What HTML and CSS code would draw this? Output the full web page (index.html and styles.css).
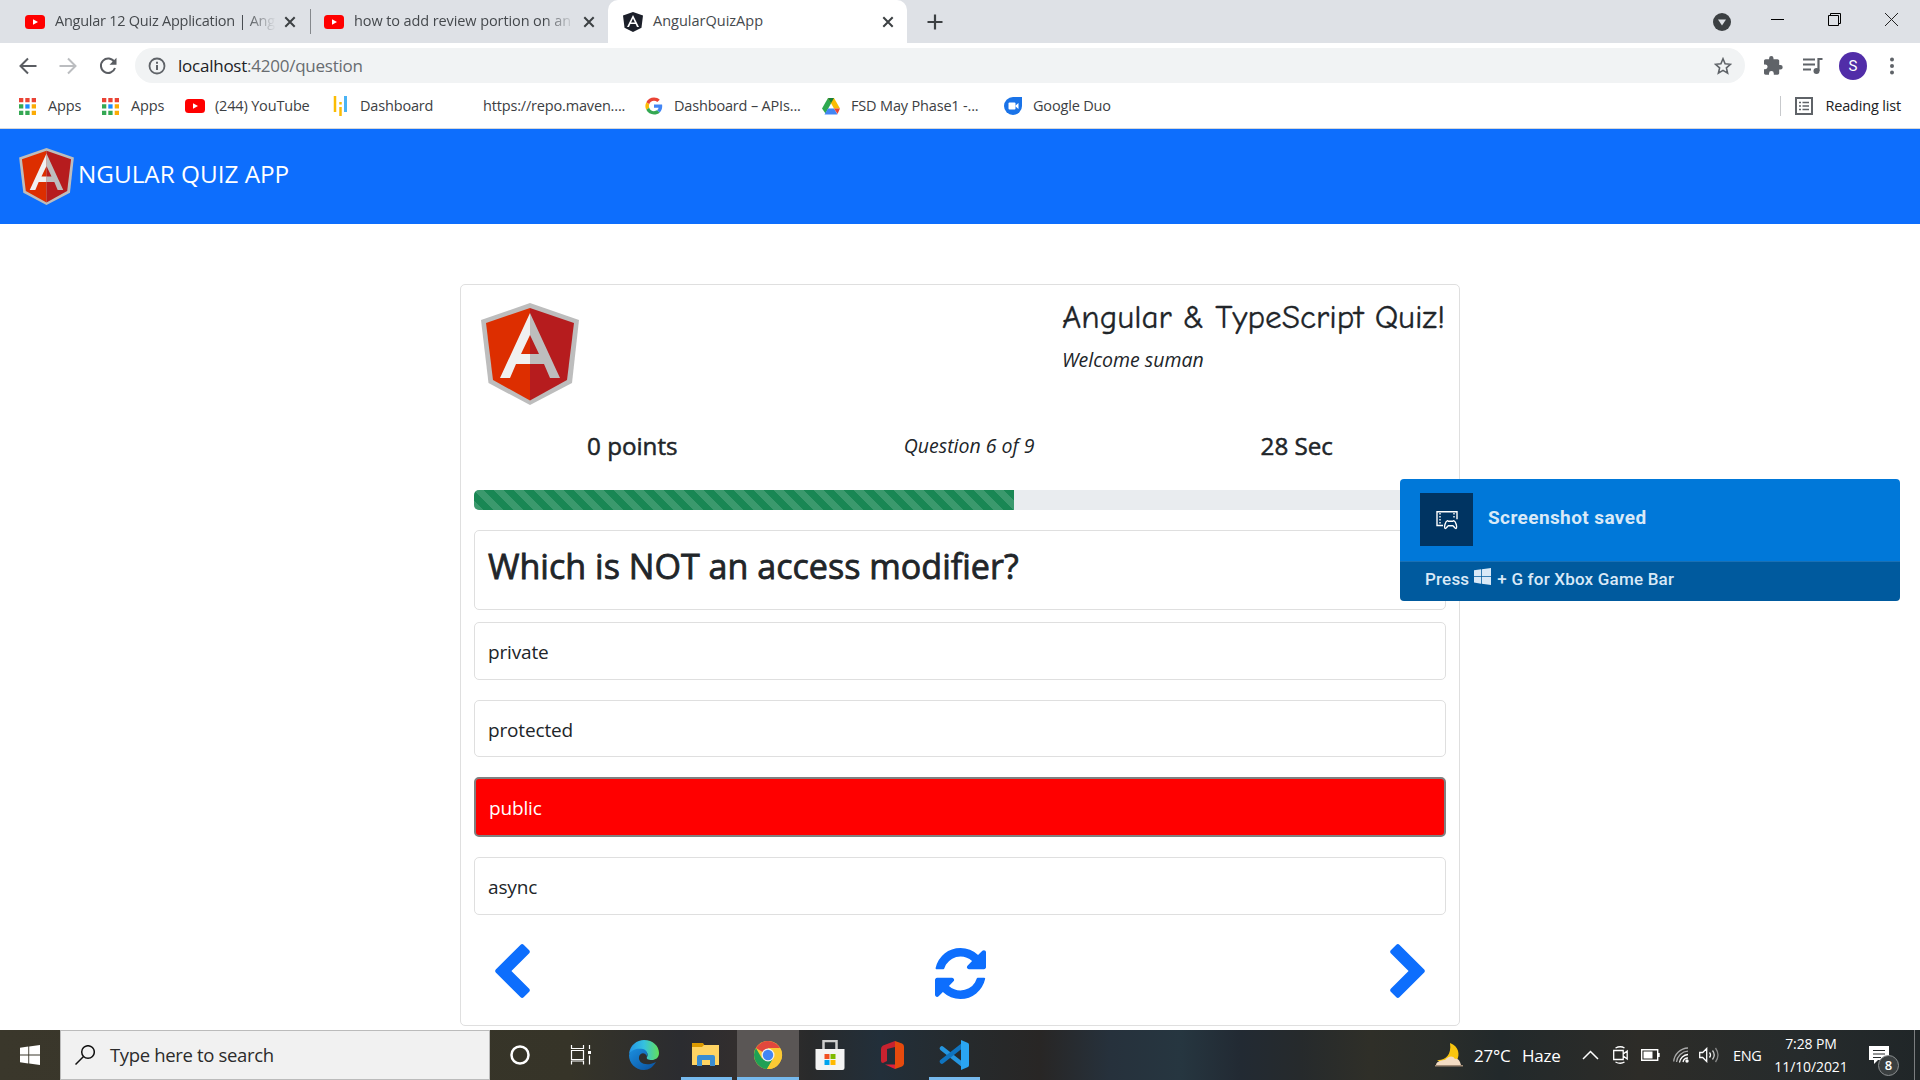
FILE: index.html
```html
<!DOCTYPE html>
<html lang="en">
<head>
<meta charset="utf-8">
<title>AngularQuizApp</title>
<link rel="stylesheet" href="styles.css">
</head>
<body>
<svg class="defs" aria-hidden="true">
  <symbol id="youtube" viewBox="0 0 20 14"><rect width="20" height="14" rx="3.5" fill="#f00"/><path d="M8 4.2v5.6L13 7z" fill="#fff"/></symbol>
  <symbol id="close" viewBox="0 0 12 12"><path d="M1.3 1.3l9.4 9.4M10.7 1.3L1.3 10.7" stroke="#3c4043" stroke-width="2"/></symbol>
  <symbol id="apps" viewBox="0 0 17 17"><path d="M0 0h4.3v4.3H0zM6.3 0h4.3v4.3H6.3zM12.7 0H17v4.3h-4.3z" fill="#ea4335"/><path d="M0 6.3h4.3v4.3H0zM0 12.7h4.3V17H0zM6.3 12.7h4.3V17H6.3z" fill="#34a853"/><path d="M6.3 6.3h4.3v4.3H6.3z" fill="#1a8cff"/><path d="M12.7 6.3H17v4.3h-4.3zM12.7 12.7H17V17h-4.3z" fill="#fbab05"/></symbol>
  <symbol id="shield" viewBox="0 0 98 102"><path d="M49 0l49 17-7 63-42 22L7.500 80 0 17z" fill="#bdbdbd"/><path d="M49 5v92.500L12 77 5 20z" fill="#dd2e00"/><path d="M49 5v92.500L86 77l7-57z" fill="#b61c1e"/><path d="M49 10L19 75h10l6-14h14V51h-9l9-19z" fill="#f0f0f0"/><path d="M49 10l30 65H69l-6-14H49V51h9l-9-19z" fill="#bdbdbd"/></symbol>
  <symbol id="windows" viewBox="0 0 20 20"><path d="M0 2.700l8.300-1.200v8H0zM9.200 1.400L20 0v9.500H9.200zM0 10.400h8.300v8L0 17.200zM9.200 10.400H20V20L9.200 18.500z" fill="currentColor"/></symbol>
  <symbol id="chevron" viewBox="410 26 1036 1612"><path fill="currentColor" d="M1427 301l-531 531 531 531q19 19 19 45t-19 45l-166 166q-19 19-45 19t-45-19l-742-742q-19-19-19-45t19-45l742-742q19-19 45-19t45 19l166 166q19 19 19 45t-19 45z"/></symbol>
</svg>

<header class="browser">
  <div class="tabs">
    <div class="tab"><svg class="fav-yt"><use href="#youtube"/></svg><span class="tab-title fade">Angular 12 Quiz Application | Ang</span><svg class="tab-close"><use href="#close"/></svg></div>
    <div class="tab-sep"></div>
    <div class="tab tab-second"><svg class="fav-yt"><use href="#youtube"/></svg><span class="tab-title fade">how to add review portion on an</span><svg class="tab-close"><use href="#close"/></svg></div>
    <div class="tab active"><svg class="fav-ng" viewBox="0 0 20 20"><path d="M10 0l10 3.500-1.500 12.300L10 20l-8.500-4.200L0 3.500z" fill="#1b1f29"/><path d="M10 3L4 15h2l1.400-3h5.200l1.400 3h2zm0 3.500l1.900 4H8.100z" fill="#fff"/></svg><span class="tab-title">AngularQuizApp</span><svg class="tab-close"><use href="#close"/></svg></div>
    <svg class="new-tab" viewBox="0 0 16 16"><path d="M8 .500v15M.500 8h15" stroke="#3c4043" stroke-width="2.200"/></svg>
    <div class="window-controls">
      <svg class="tab-search" viewBox="0 0 18 18"><circle cx="9" cy="9" r="9" fill="#3c4043"/><path d="M5 6.500h8L9 12.500z" fill="#dee1e6"/></svg>
      <svg class="wc" viewBox="0 0 13 13"><path d="M0 6.500h13" stroke="#000"/></svg>
      <svg class="wc" viewBox="0 0 13 13"><path d="M.500 2.500h10v10h-10zM2.500 2.500v-2h10v10h-2" fill="none" stroke="#000"/></svg>
      <svg class="wc" viewBox="0 0 13 13"><path d="M0 0l13 13M13 0L0 13" stroke="#222"/></svg>
    </div>
  </div>

  <div class="toolbar">
    <div class="nav-icons">
      <svg viewBox="0 0 18 18"><path d="M17.500 9H2M9 1.500L1.500 9 9 16.500" fill="none" stroke="#5a5d62" stroke-width="2"/></svg>
      <svg viewBox="0 0 18 18"><path d="M.500 9H16M9 1.500L16.500 9 9 16.500" fill="none" stroke="#bbbdc0" stroke-width="2"/></svg>
      <svg viewBox="0 0 18 18"><path d="M15.300 5A7.200 7.200 0 1 0 16 11" fill="none" stroke="#5a5d62" stroke-width="2"/><path d="M17.500.800v7h-7z" fill="#5a5d62"/></svg>
    </div>
    <div class="omnibox">
      <svg class="info" viewBox="0 0 18 18"><circle cx="9" cy="9" r="7.500" fill="none" stroke="#5f6368" stroke-width="1.800"/><path d="M9 8v5M9 4.800v1.900" stroke="#5f6368" stroke-width="2"/></svg>
      <span class="url"><b>localhost</b>:4200/question</span>
      <svg class="star" viewBox="0 0 18 18"><path d="M9 1.800l2.100 5 5.400.500-4.100 3.600 1.200 5.300L9 13.400l-4.600 2.800 1.200-5.300-4.100-3.600 5.400-.500z" fill="none" stroke="#5f6368" stroke-width="1.600"/></svg>
    </div>
    <div class="actions">
      <svg viewBox="0 0 20 20" class="puzzle"><path d="M17.500 9h-1.300V5c0-1-.800-1.700-1.700-1.700h-4V2.200a2.200 2.200 0 0 0-4.400 0v1.100H2.700C1.700 3.300 1 4 1 5v3.400h1.200a2.400 2.400 0 0 1 0 4.800H1V17c0 1 .700 1.700 1.700 1.700H6v-1.200a2.400 2.400 0 0 1 4.800 0v1.200h3.700c1 0 1.700-.800 1.700-1.700v-3.600h1.300a2.200 2.200 0 0 0 0-4.400z" fill="#5f6368"/></svg>
      <svg viewBox="0 0 20 18" class="music"><path d="M0 2.500h12M0 7.500h12M0 12.500h8" stroke="#5f6368" stroke-width="2"/><path d="M15.500 14V2h4" fill="none" stroke="#5f6368" stroke-width="2.200"/><circle cx="13.500" cy="14" r="3" fill="#5f6368"/></svg>
      <span class="avatar">S</span>
      <svg viewBox="0 0 4 18" class="dots"><g fill="#5f6368"><circle cx="2" cy="2.500" r="2"/><circle cx="2" cy="9" r="2"/><circle cx="2" cy="15.500" r="2"/></g></svg>
    </div>
  </div>

  <div class="bookmarks">
    <div class="bookmark"><svg class="bi-apps"><use href="#apps"/></svg><span>Apps</span></div>
    <div class="bookmark"><svg class="bi-apps"><use href="#apps"/></svg><span>Apps</span></div>
    <div class="bookmark"><svg class="bi-yt"><use href="#youtube"/></svg><span>(244) YouTube</span></div>
    <div class="bookmark"><svg viewBox="0 0 20 20"><path d="M5 0v16M10.500 11v9" stroke="#fbbc04" stroke-width="2.500"/><path d="M10.500 6v2.500" stroke="#fbbc04" stroke-width="2.500"/><path d="M15.500 0v16" stroke="#4ab3f4" stroke-width="3"/></svg><span>Dashboard</span></div>
    <div class="bookmark"><i></i><span>https://repo.maven....</span></div>
    <div class="bookmark"><svg viewBox="-4 -4 56 56"><path fill="#ea4335" d="M24 9.500c3.500 0 6.700 1.200 9.200 3.600l6.900-6.900C35.900 2.400 30.500 0 24 0 14.600 0 6.500 5.400 2.600 13.200l8 6.200C12.400 13.700 17.700 9.500 24 9.500z"/><path fill="#4285f4" d="M47 24.600c0-1.600-.200-3.100-.400-4.600H24v9h12.900c-.600 3-2.200 5.500-4.700 7.200l7.700 6C44.400 38 47 31.800 47 24.600z"/><path fill="#fbbc05" d="M10.500 28.600a14.500 14.500 0 0 1 0-9.200l-8-6.200a24 24 0 0 0 0 21.600z"/><path fill="#34a853" d="M24 48c6.500 0 11.900-2.100 15.900-5.800l-7.700-6c-2.200 1.500-4.900 2.300-8.200 2.300-6.300 0-11.600-4.200-13.500-9.900l-8 6.200C6.500 42.600 14.600 48 24 48z"/></svg><span>Dashboard – APIs...</span></div>
    <div class="bookmark"><svg viewBox="0 0 20 20"><path d="M7 2h6L4.500 17.500 1 12.500z" fill="#2da94f"/><path d="M7 2h6l6 10.500h-6z" fill="#fbbc04"/><path d="M7 2h6l-3 5.300z" fill="#188038"/><path d="M7 12.500h6l3.500 6h-13z" fill="#4285f4"/><path d="M13 12.500h6l-2.500 5.500z" fill="#ea4335"/></svg><span>FSD May Phase1 -...</span></div>
    <div class="bookmark"><svg viewBox="0 0 20 20"><path d="M10 1h9v9a9 9 0 1 1-9-9z" fill="#1a73e8"/><rect x="5.500" y="6.500" width="7" height="7" rx="1" fill="#fff"/><path d="M12.500 9.500l3-2.500v6l-3-2.500z" fill="#fff"/></svg><span>Google Duo</span></div>
    <div class="reading-list"><svg viewBox="0 0 18 18"><path d="M1 1h16v16H1z" fill="none" stroke="#5f6368" stroke-width="2"/><path d="M4 5.500h2M4 9h2M4 12.500h2M7.500 5.500H14M7.500 9H14M7.500 12.500H14" stroke="#5f6368" stroke-width="1.700"/></svg><span>Reading list</span></div>
  </div>
</header>

<nav class="navbar"><svg class="brand-logo"><use href="#shield"/></svg><span class="brand">NGULAR QUIZ APP</span></nav>

<main class="page">
  <section class="card">
    <div class="card-head">
      <svg class="card-logo"><use href="#shield"/></svg>
      <div class="headings"><h1>Angular &amp; TypeScript Quiz!</h1><em>Welcome suman</em></div>
    </div>
    <div class="stats"><strong class="points">0 points</strong><em>Question 6 of 9</em><strong class="secs">28 Sec</strong></div>
    <div class="progress"><div class="bar"></div></div>
    <div class="question"><h2>Which is NOT an access modifier?</h2></div>
    <ol class="options">
      <li>private</li>
      <li>protected</li>
      <li class="wrong">public</li>
      <li>async</li>
    </ol>
    <div class="pager">
      <svg class="chev"><use href="#chevron"/></svg>
      <svg class="refresh" viewBox="128 128 1536 1536"><path fill="currentColor" d="M1639 1056q0 5-1 7-64 268-268 434.500t-478 166.500q-146 0-282.500-55t-243.500-157l-129 129q-19 19-45 19t-45-19-19-45v-448q0-26 19-45t45-19h448q26 0 45 19t19 45-19 45l-137 137q71 66 161 102t187 36q134 0 250-65t186-179q11-17 53-117 8-23 30-23h192q13 0 22.500 9.500t9.500 22.500zm25-800v448q0 26-19 45t-45 19h-448q-26 0-45-19t-19-45 19-45l138-138q-148-137-349-137-134 0-250 65t-186 179q-11 17-53 117-8 23-30 23h-199q-13 0-22.500-9.500t-9.500-22.500v-7q65-268 270-434.500t480-166.500q146 0 284 55.500t245 156.500l130-129q19-19 45-19t45 19 19 45z"/></svg>
      <svg class="chev next"><use href="#chevron"/></svg>
    </div>
  </section>
</main>

<aside class="toast">
  <div class="toast-main">
    <span class="toast-icon"><svg viewBox="0 0 22 20"><g fill="none" stroke="#fff" stroke-width="1.400"><path d="M7 15.500H1V1.700h20v7.500"/><path d="M4 3v11M18 3v6" stroke-dasharray="1.500 1.500"/><path d="M9 18.500c-1.200-1 .200-7 2.500-7.800l1 .600h4.200l1-.600c2.300.800 3.700 6.800 2.500 7.800-1 .600-2.300-2.200-3.200-2.700h-4.800c-.900.500-2.200 3.300-3.200 2.700z"/></g></svg></span>
    <b>Screenshot saved</b>
  </div>
  <div class="toast-foot"><span class="press">Press</span><svg><use href="#windows"/></svg><span class="hint">+ G for Xbox Game Bar</span></div>
</aside>

<footer class="taskbar">
  <div class="start"><svg><use href="#windows"/></svg></div>
  <div class="search"><svg viewBox="0 0 20 20"><circle cx="13" cy="7" r="6.300" fill="none" stroke="#111" stroke-width="1.500"/><path d="M8.500 11.500L.500 19.500" stroke="#111" stroke-width="1.500"/></svg><span>Type here to search</span></div>
  <div class="apps">
    <div class="app cortana"><svg viewBox="0 0 30 30"><circle cx="15" cy="15" r="8.500" fill="none" stroke="#fff" stroke-width="2.500"/></svg></div>
    <div class="app task-view"><svg viewBox="0 0 30 30"><g fill="none" stroke="#fff" stroke-width="1.200"><path d="M5.500 5v3.500h12V5M5.500 10.500h12v9h-12zM5.500 24.500V21h12v3.500M23.500 5v4M23.500 15.500v9"/></g><path d="M22 11h3v3h-3z" fill="#fff"/></svg></div>
    <div class="app"><svg viewBox="0 0 30 30"><defs><linearGradient id="edgeTop" x1="0" x2="1"><stop stop-color="#2394e6"/><stop offset=".5" stop-color="#35c1e0"/><stop offset="1" stop-color="#62e05a"/></linearGradient><linearGradient id="edgeLow" x1="0" y1="0" x2="1" y2="1"><stop stop-color="#1b8fe0"/><stop offset="1" stop-color="#0a4f9c"/></linearGradient></defs><path d="M0 14C1 5 8 0 15 0c9 0 15 6 15 13 0 5-4 7-7 7-4 0-6-1-5-3 1-1 1-5-2-6C10 8 3 11 0 14z" fill="url(#edgeTop)"/><path d="M0 15C2 9 9 8 14 9c4 1 5 5 4 8-1-5-7-5-8 0-1 6 7 10 17 5-3 5-7 8-12 8C6 30 0 23 0 15z" fill="url(#edgeLow)"/></svg></div>
    <div class="app open"><svg viewBox="0 0 30 30"><path d="M1 3h11l2 3h14v8H1z" fill="#dc9a00"/><path d="M1 7h10l2-2h15v20H1z" fill="#ffd463"/><path d="M6 26V17q0-2 2-2h14q2 0 2 2v9h-5v-6h-8v6z" fill="#3a8dd2"/></svg></div>
    <div class="app open focused"><svg viewBox="0 0 30 30"><circle cx="15" cy="15" r="14" fill="#fbc934"/><path d="M15 15L2.900 8A14 14 0 0 1 27.100 8H15z" fill="#e2483d"/><path d="M2.900 8A14 14 0 0 0 14 29l6-10.500H9z" fill="#1fa055"/><path d="M15 8.500h12.400A14 14 0 0 1 14 29l7-11z" fill="#fbc934"/><circle cx="15" cy="15" r="6.500" fill="#f1f1f1"/><circle cx="15" cy="15" r="5.200" fill="#4285f4"/></svg></div>
    <div class="app"><svg viewBox="0 0 30 30"><path d="M8.500 9V1h13v8" fill="none" stroke="#cfcfcf" stroke-width="2.500"/><path d="M.500 9h29v19q0 2-2 2h-25q-2 0-2-2z" fill="#f4f4f4"/><path d="M9.500 14h5v5h-5z" fill="#f25022"/><path d="M15.500 14h5v5h-5z" fill="#7fba00"/><path d="M9.500 20h5v5h-5z" fill="#00a4ef"/><path d="M15.500 20h5v5h-5z" fill="#ffb900"/></svg></div>
    <div class="app"><svg viewBox="0 0 30 30"><path d="M18 1L6 5.500Q4 6.500 4 9v12q0 2 2 2l4-2V9l8-2z" fill="#c8222f"/><path d="M18 1l7 2.500q2 1 2 3v17q0 2-2 3L18 29z" fill="#e64a0d"/><path d="M8 24.500h10V29z" fill="#e0203a"/></svg></div>
    <div class="app open"><svg viewBox="0 0 30 30"><path d="M3 8.500L24 25" stroke="#2596e0" stroke-width="4.500" stroke-linecap="round"/><path d="M3 21.500L24 5" stroke="#0f74c0" stroke-width="4.500" stroke-linecap="round"/><path d="M22 0l7 3q1 .500 1 2v20q0 1.500-1 2l-7 3z" fill="#2aa5f2"/></svg></div>
  </div>
  <div class="tray">
    <svg class="moon" viewBox="0 0 28 24"><path d="M15 0c9 3 10 12 7 17-3 5-13 5-20 0 7 1 15-4 13-17z" fill="#f9c50f"/><path d="M1 22c0-4 7-5 9-5 3-4 8-5 10-1 3-1 5 2 6 6z" fill="#f3dcc3"/><path d="M0 22h28v1.500H0z" fill="#a08a75"/></svg>
    <span class="temp">27°C</span><span class="haze">Haze</span>
    <svg class="up" viewBox="0 0 17 10"><path d="M1 9l7.500-7.500L16 9" fill="none" stroke="#fff" stroke-width="1.500"/></svg>
    <svg class="meet" viewBox="0 0 15 18"><path d="M.700 4.500h9.500v9H.700zM10.200 8l4-3v8l-4-3M2.500 2q5-2.500 9 0M2.500 16q5 2.500 9 0" fill="none" stroke="#fff" stroke-width="1.300"/></svg>
    <svg class="battery" viewBox="0 0 19 12"><path d="M.700.700h16v10.600H.700zM18 4v4" fill="none" stroke="#fff" stroke-width="1.400"/><path d="M2.500 2.500h9v7h-9z" fill="#fff"/></svg>
    <svg class="wifi" viewBox="0 0 16 16"><g fill="none" stroke="#fff" stroke-width="1.300"><path d="M10 15a5 5 0 0 1 5-4M6.500 15.500A9 9 0 0 1 15 7.500"/><path d="M3.500 15A12 12 0 0 1 15 4.200M.700 14.500A15 15 0 0 1 15 1" stroke="#aaa"/></g><circle cx="14" cy="14" r="1.700" fill="#fff"/></svg>
    <svg class="speaker" viewBox="0 0 20 16"><path d="M.700 5.500h3l4-4v13l-4-4h-3zM10.500 5.500q2 2.500 0 5" fill="none" stroke="#fff" stroke-width="1.300"/><path d="M13.500 3.500q3.500 4.500 0 9" fill="none" stroke="#ccc" stroke-width="1.300"/><path d="M16.500 1q5 7 0 14" fill="none" stroke="#888" stroke-width="1.300"/></svg>
    <span class="lang">ENG</span>
    <div class="clock"><span>7:28 PM</span><span>11/10/2021</span></div>
    <div class="notify"><svg viewBox="0 0 20 18"><path d="M0 0h20v14H9l-4 4v-4H0z" fill="#fff"/><path d="M4 4.500h12M4 8h12M4 11.500h8" stroke="#262b2c" stroke-width="1.200"/></svg><span class="badge">8</span></div>
    <div class="desktop-edge"></div>
  </div>
</footer>
</body>
</html>
```
FILE: styles.css
```css
* { box-sizing: border-box; }

body {
  margin: 0;
  height: 1080px;
  overflow: hidden;
  display: flex;
  flex-direction: column;
  background: #fff;
  color: #212529;
  font-family: "Open Sans", "Noto Sans", sans-serif;
}

svg { display: block; flex: none; }
.defs { display: none; }
h1, h2, ol { margin: 0; padding: 0; }

/* Browser chrome */
.browser { height: 129px; flex: none; border-bottom: 1px solid #d5d7da; }

.tabs {
  height: 43px;
  display: flex;
  align-items: center;
  padding-left: 10px;
  background: #dee1e6;
  color: #45494d;
}
.tab { display: flex; align-items: center; width: 300px; height: 43px; padding: 0 14px 0 15px; }
.tab-sep { width: 1px; height: 25px; background: #85888c; }
.tab-second { width: 297px; padding-left: 13px; padding-right: 13px; }
.tab.active { width: 299px; background: #fff; border-radius: 10px 10px 0 0; padding: 0 13px 0 15px; }
.tab-title {
  flex: 1;
  height: 20px;
  font-size: 14.5px;
  line-height: 20px;
  margin: 0 8px 2px 10px;
  white-space: nowrap;
}
.fade { letter-spacing: -0.25px; -webkit-mask-image: linear-gradient(90deg, #000 86%, transparent); mask-image: linear-gradient(90deg, #000 86%, transparent); }
.tab-second .fade { letter-spacing: -0.1px; }
.fav-yt { width: 20px; height: 14px; }
.fav-ng { width: 20px; height: 20px; }
.tab-close { width: 12px; height: 12px; }
.new-tab { width: 16px; height: 16px; margin-left: 20px; }
.window-controls { display: flex; align-items: center; margin-left: auto; padding-right: 22px; }
.tab-search { width: 18px; height: 18px; margin-right: 40px; }
.wc { width: 13px; height: 13px; margin: 0 0 5px; }
.wc + .wc { margin-left: 44px; }

.toolbar { height: 45px; display: flex; align-items: center; padding: 0 26px 0 19px; }
.nav-icons { display: flex; gap: 22px; width: 116px; }
.nav-icons svg { width: 18px; height: 18px; }
.omnibox {
  display: flex;
  align-items: center;
  width: 1610px;
  height: 35px;
  padding: 0 13px 0 13px;
  border-radius: 18px;
  background: #f1f3f4;
}
.info { width: 18px; height: 18px; }
.url { flex: 1; margin-left: 12px; font-size: 17px; letter-spacing: -0.24px; color: #686c70; }
.url b { font-weight: 400; color: #202124; }
.star { width: 18px; height: 18px; }
.actions { display: flex; align-items: center; margin-left: 18px; }
.puzzle { width: 20px; height: 20px; }
.music { width: 20px; height: 18px; margin-left: 20px; }
.avatar {
  width: 28px;
  height: 28px;
  margin-left: 16px;
  border-radius: 50%;
  background: #512da8;
  color: #fff;
  font: 15px/28px Roboto, sans-serif;
  text-align: center;
}
.dots { width: 4px; height: 18px; margin-left: 23px; }

.bookmarks {
  height: 36px;
  display: grid;
  grid-template-columns: 83px 84px 145px 123px 191px 177px 182px 1fr auto;
  align-items: center;
  padding: 0 19px 0 18px;
  color: #3c4043;
  font-size: 14.5px;
  letter-spacing: -0.17px;
}
.bookmark { display: flex; align-items: center; gap: 10px; white-space: nowrap; }
.bookmark span, .reading-list span { margin-bottom: 2px; }
.bookmark svg, .bookmark i { width: 20px; height: 20px; }
.bookmark .bi-apps { width: 17px; height: 17px; margin: 0 2px 0 1px; }
.bookmark .bi-yt { height: 14px; }
.reading-list { display: flex; align-items: center; gap: 12px; height: 20px; padding-left: 14px; border-left: 1px solid #c7c9cc; color: #202124; }
.reading-list svg { width: 18px; height: 18px; }

/* Application */
.navbar { height: 95px; flex: none; display: flex; align-items: center; padding: 0 19px; background: #0d6efd; color: #fff; }
.brand-logo { width: 55px; height: 57px; }
.brand { margin: 0 0 6px 4px; font-size: 24.3px; }

.page { flex: 1; }
.card { width: 1000px; height: 742px; margin: 60px auto 0; padding: 13px; border: 1px solid #dfdfdf; border-radius: 5px; }
.card-head { display: flex; justify-content: space-between; height: 132px; }
.card-logo { width: 98px; height: 102px; margin: 5px 0 0 7px; }
.headings { width: 384px; }
h1 { font-size: 33.2px; line-height: 38px; font-weight: 400; font-family: "Comic Sans MS", "Comic Neue", "Open Sans", sans-serif; white-space: nowrap; -webkit-text-stroke: 0.3px currentColor; }
.headings em { display: block; margin-top: 8px; font-size: 19.5px; line-height: 31px; }

.stats { display: flex; justify-content: space-around; align-items: center; height: 31px; margin-bottom: 29px; white-space: nowrap; }
.stats strong { font-size: 24.2px; font-weight: 400; line-height: 31px; -webkit-text-stroke: 0.5px currentColor; }
.stats em { font-size: 19.5px; }

.progress { height: 20px; border-radius: 5px; overflow: hidden; background: #e9ecef; }
.bar {
  width: 540px;
  height: 100%;
  background: #198754 linear-gradient(45deg, rgba(255,255,255,.15) 25%, transparent 25%, transparent 50%, rgba(255,255,255,.15) 50%, rgba(255,255,255,.15) 75%, transparent 75%) 0 0 / 20px 20px;
}

.question { height: 80px; margin: 20px 0 12.2px; padding: 13px; border: 1px solid #dfdfdf; border-radius: 5px; }
h2 { font-size: 34.1px; line-height: 45px; font-weight: 400; white-space: nowrap; -webkit-text-stroke: 0.8px currentColor; }

.options { list-style: none; }
.options li { height: 57.6px; margin-bottom: 20px; padding: 0 13px; border: 1px solid #dfdfdf; border-radius: 5px; font-size: 19px; line-height: 59px; letter-spacing: -0.15px; }
.options .wrong { height: 59.8px; border: 2px solid gray; background: red; color: #fff; }

.pager { display: flex; justify-content: space-between; align-items: flex-start; margin-top: 29.5px; padding: 0 21px; color: #0d6efd; }
.chev { width: 35px; height: 54px; }
.next { transform: scaleX(-1); }
.refresh { width: 51px; height: 51px; margin-top: 4px; }

/* Game bar notification, floating above the page */
.toast { position: absolute; left: 1400px; top: 479px; width: 500px; height: 122px; border-radius: 4px; overflow: hidden; color: #d9e9f7; font-family: Roboto, sans-serif; }
.toast-main { display: flex; height: 82px; padding: 14px 20px; background: #0078d9; }
.toast-icon { display: grid; place-items: center; width: 53px; height: 53px; background: #003462; }
.toast-icon svg { width: 22px; height: 20px; }
.toast b { margin: 13px 0 0 15px; font-size: 19px; line-height: 24px; letter-spacing: 0.4px; white-space: nowrap; }
.toast-foot { display: flex; align-items: center; height: 40px; padding: 0 25px 6px; border-top: 1px solid #1a70b4; background: #005a9e; font-size: 17px; font-weight: 500; letter-spacing: 0.2px; white-space: nowrap; }
.toast-foot svg { width: 17px; height: 17px; margin: 0 6px 4px 5px; }

/* Windows taskbar */
.taskbar { position: relative; z-index: 1; display: flex; flex: none; height: 50px; color: #fff; background: linear-gradient(90deg, #3a372b 0, #363428 570px, #2b2c30 680px, #352f2d 760px, #292a2b 810px, #222f3a 880px, #262a2c 970px, #282625 1040px, #26313c 1110px, #263640 1180px, #222a33 1240px, #262a2c 1300px, #2f2f28 1370px, #2a2d2a 1440px, #22292b 1500px, #2d2c28 1640px, #262b2c 1800px, #202628 100%); }
.start { display: grid; place-items: center; width: 60px; }
.start svg { width: 20px; height: 20px; }
.search { display: flex; align-items: center; width: 430px; padding-left: 14px; border: 1px solid #bbb; background: #f1f1f1; color: #2b2b2b; font-size: 18.5px; letter-spacing: -0.34px; }
.search svg { width: 20px; height: 20px; }
.search span { margin: 0 0 2px 15px; }
.apps { display: flex; margin-left: -1px; }
.app { display: grid; place-items: center; width: 62px; }
.app svg { width: 30px; height: 30px; }
.task-view { padding-right: 3px; }
.open { background: linear-gradient(#76b9ed, #76b9ed) center bottom / 51px 3px no-repeat; }
.focused { background: linear-gradient(#76b9ed, #76b9ed) center bottom / 62px 3px no-repeat #5a5655; }

.tray { display: flex; align-items: center; margin-left: auto; }
.moon { width: 28px; height: 24px; }
.temp, .haze { font-size: 17px; letter-spacing: -0.25px; }
.temp { margin-left: 11px; width: 38px; }
.haze { margin-left: 10px; width: 39px; }
.up { width: 17px; height: 10px; margin-left: 21px; }
.meet { width: 15px; height: 18px; margin-left: 14px; }
.battery { width: 19px; height: 12px; margin-left: 13px; }
.wifi { width: 16px; height: 16px; margin-left: 13px; }
.speaker { width: 20px; height: 16px; margin-left: 10px; }
.lang { width: 29px; margin-left: 14px; font-size: 14.5px; letter-spacing: -0.4px; }
.clock { display: flex; flex-direction: column; align-items: center; width: 76px; margin-left: 11px; font-size: 14px; line-height: 23px; letter-spacing: -0.1px; }
.notify { position: relative; margin-left: 20px; }
.notify > svg { width: 20px; height: 18px; }
.badge { position: absolute; left: 9px; top: 9px; width: 21px; height: 21px; border: 1px solid #8c9091; border-radius: 50%; background: #3a3f40; font-size: 13px; font-weight: 600; line-height: 19px; text-align: center; }
.desktop-edge { width: 6px; height: 50px; margin-left: 25px; border-left: 1px solid #7b7e80; }
```
